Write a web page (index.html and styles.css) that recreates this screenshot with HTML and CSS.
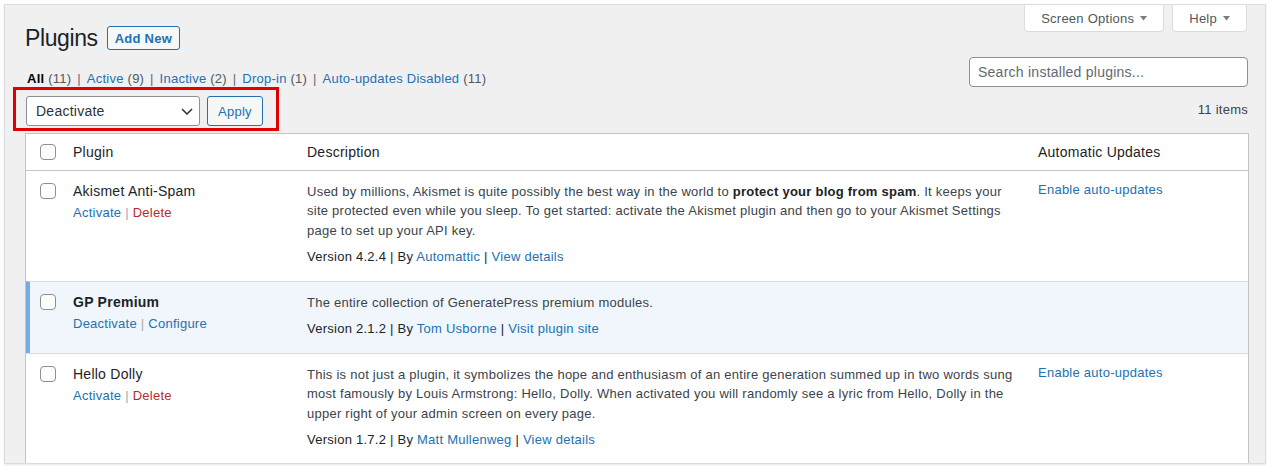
FILE: index.html
```html
<!DOCTYPE html>
<html lang="en">
<head>
  <meta charset="UTF-8" />
  <meta name="viewport" content="width=device-width, initial-scale=1.0" />
  <title>Plugins</title>
  <link rel="stylesheet" href="styles.css">
</head>
<body>
  <div class="screen">
    <!-- Screen options / help tabs -->
    <div class="screen-meta">
      <button class="meta-tab">Screen Options <svg width="7" height="5" viewBox="0 0 7 5"><path d="M0 0h7L3.5 4.5z" fill="#787c82"/></svg></button>
      <button class="meta-tab">Help <svg width="7" height="5" viewBox="0 0 7 5"><path d="M0 0h7L3.5 4.5z" fill="#787c82"/></svg></button>
    </div>

    <div class="wrap">
      <div class="page-head">
        <h1>Plugins</h1>
        <a class="add-new" href="#">Add New</a>
      </div>

      <div class="filters">
        <ul class="views">
          <li><a class="current" href="#">All <span class="count">(11)</span></a> <span class="sep">|</span></li>
          <li><a href="#">Active <span class="count">(9)</span></a> <span class="sep">|</span></li>
          <li><a href="#">Inactive <span class="count">(2)</span></a> <span class="sep">|</span></li>
          <li><a href="#">Drop-in <span class="count">(1)</span></a> <span class="sep">|</span></li>
          <li><a href="#">Auto-updates Disabled <span class="count">(11)</span></a></li>
        </ul>
        <input class="search" type="search" placeholder="Search installed plugins..." />
      </div>

      <div class="tablenav">
        <div class="highlight">
          <div class="select">
            <span>Deactivate</span>
            <svg width="12" height="7" viewBox="0 0 12 7"><path d="M1 1l5 5 5-5" fill="none" stroke="#2c3338" stroke-width="1.5"/></svg>
          </div>
          <button class="apply">Apply</button>
        </div>
        <span class="num-items">11 items</span>
      </div>

      <!-- Plugin list -->
      <table class="plugins">
        <thead>
          <tr>
            <th class="col-check"><input class="cb" type="checkbox" /></th>
            <th class="col-plugin">Plugin</th>
            <th class="col-desc">Description</th>
            <th class="col-auto">Automatic Updates</th>
          </tr>
        </thead>
        <tbody>
          <tr>
            <td class="check"><input class="cb" type="checkbox" /></td>
            <td>
              <div class="plugin-title">Akismet Anti-Spam</div>
              <div class="row-actions"><a href="#">Activate</a> <span class="sep">|</span> <a class="delete" href="#">Delete</a></div>
            </td>
            <td>
              <p class="desc">Used by millions, Akismet is quite possibly the best way in the world to <strong>protect your blog from spam</strong>. It keeps your site protected even while you sleep. To get started: activate the Akismet plugin and then go to your Akismet Settings page to set up your API key.</p>
              <div class="meta">Version 4.2.4 | By <a href="#">Automattic</a> | <a href="#">View details</a></div>
            </td>
            <td><a href="#">Enable auto-updates</a></td>
          </tr>
          <tr class="active">
            <td class="check"><input class="cb" type="checkbox" /></td>
            <td>
              <div class="plugin-title"><strong>GP Premium</strong></div>
              <div class="row-actions"><a href="#">Deactivate</a> <span class="sep">|</span> <a href="#">Configure</a></div>
            </td>
            <td>
              <p class="desc">The entire collection of GeneratePress premium modules.</p>
              <div class="meta">Version 2.1.2 | By <a href="#">Tom Usborne</a> | <a href="#">Visit plugin site</a></div>
            </td>
            <td></td>
          </tr>
          <tr>
            <td class="check"><input class="cb" type="checkbox" /></td>
            <td>
              <div class="plugin-title">Hello Dolly</div>
              <div class="row-actions"><a href="#">Activate</a> <span class="sep">|</span> <a class="delete" href="#">Delete</a></div>
            </td>
            <td>
              <p class="desc">This is not just a plugin, it symbolizes the hope and enthusiasm of an entire generation summed up in two words sung most famously by Louis Armstrong: Hello, Dolly. When activated you will randomly see a lyric from Hello, Dolly in the upper right of your admin screen on every page.</p>
              <div class="meta">Version 1.7.2 | By <a href="#">Matt Mullenweg</a> | <a href="#">View details</a></div>
            </td>
            <td><a href="#">Enable auto-updates</a></td>
          </tr>
        </tbody>
      </table>
    </div>
  </div>
</body>
</html>
```

FILE: styles.css
```css
* {
  box-sizing: border-box;
}
body {
  margin: 0;
  padding: 4px;
  background-color: #fff;
  color: #3c434a;
  font-family: "Liberation Sans", Arial, sans-serif;
  font-size: 13px;
  letter-spacing: 0.25px;
}
a {
  color: #2271b1;
  text-decoration: none;
}
button, input {
  font: inherit;
  letter-spacing: inherit;
}

.screen {
  height: 460px;
  overflow: hidden;
  background-color: #f0f0f1;
  border: 1px solid #dcdcde;
  box-shadow: 0 1px 2px rgba(0, 0, 0, 0.1);
}

/* top tabs */
.screen-meta {
  display: flex;
  justify-content: flex-end;
  gap: 8px;
  padding-right: 18px;
}
.meta-tab {
  display: flex;
  align-items: center;
  gap: 6px;
  height: 27px;
  padding: 0 16px;
  background-color: #fff;
  border: 1px solid #dcdcde;
  border-top: 0;
  border-radius: 0 0 4px 4px;
  color: #50575e;
}

.wrap {
  padding: 0 16px 0 20px;
}
.page-head {
  display: flex;
  align-items: center;
  gap: 9px;
  height: 30px;
  margin-top: -9px;
}
h1 {
  margin: 0;
  font-size: 23px;
  font-weight: 400;
  line-height: 30px;
  letter-spacing: -0.4px;
  color: #1d2327;
}
.add-new {
  display: flex;
  align-items: center;
  height: 24px;
  padding: 0 7px;
  border: 1px solid #2271b1;
  border-radius: 3px;
  background-color: #f6f7f7;
  font-weight: 600;
}

/* views + search */
.filters {
  display: flex;
  justify-content: space-between;
  align-items: flex-start;
  margin-top: 4px;
}
.views {
  margin: 13px 0 0;
  padding: 0 0 0 2px;
  list-style: none;
  line-height: 17px;
}
.views li {
  display: inline;
}
.views .current {
  color: #000;
  font-weight: 600;
}
.views .count {
  color: #50575e;
  font-weight: 400;
}
.views .sep {
  margin: 0 2px;
  color: #646970;
}
.search {
  width: 279px;
  height: 30px;
  margin-right: 1px;
  padding: 0 8px;
  border: 1px solid #8c8f94;
  border-radius: 4px;
  font-size: 14px;
  color: #2c3338;
  background-color: #fff;
}
.search::placeholder {
  color: #646970;
}

/* bulk actions */
.tablenav {
  display: flex;
  justify-content: space-between;
  align-items: center;
}
.highlight {
  display: flex;
  gap: 7px;
  margin-left: -12px;
  padding: 6px 13px 2px 10px;
  border: 3px solid #e00000;
}
.select {
  display: flex;
  align-items: center;
  justify-content: space-between;
  width: 174px;
  height: 30px;
  padding: 0 6px 0 9px;
  border: 1px solid #8c8f94;
  border-radius: 3px;
  background-color: #fff;
  font-size: 14px;
  color: #2c3338;
}
.apply {
  height: 30px;
  padding: 0 10px;
  border: 1px solid #2271b1;
  border-radius: 3px;
  background-color: #f6f7f7;
  color: #2271b1;
}
.num-items {
  margin-right: 1px;
  color: #3c434a;
}

/* table */
.plugins {
  width: 100%;
  margin-top: 2px;
  border: 1px solid #c3c4c7;
  border-spacing: 0;
  table-layout: fixed;
  background-color: #fff;
}
.plugins th {
  padding: 9px 10px 7px;
  border-bottom: 1px solid #c3c4c7;
  text-align: left;
  font-size: 14px;
  font-weight: 400;
  line-height: 1.4;
  color: #1d2327;
}
.plugins .col-check {
  width: 37px;
  padding: 0 0 0 14px;
  vertical-align: middle;
}
.col-plugin {
  width: 234px;
}
.col-desc {
  width: 731px;
}
.plugins td {
  padding: 11px 10px 14px;
  border-top: 1px solid #dcdcde;
  vertical-align: top;
}
.plugins tbody tr:first-child td {
  border-top: 0;
}
.plugins td.check {
  padding: 12px 0 0 14px;
}
.plugins .active td {
  background-color: #f0f6fc;
}
.plugins .active td.check {
  padding-left: 10px;
  border-left: 4px solid #72aee6;
}
.cb {
  appearance: none;
  display: block;
  width: 16px;
  height: 16px;
  margin: 0;
  border: 1px solid #8c8f94;
  border-radius: 4px;
  background-color: #fff;
}

.plugin-title {
  font-size: 14px;
  line-height: 1.4;
  color: #1d2327;
}
.row-actions {
  margin-top: 2px;
  line-height: 1.5;
}
.row-actions .sep {
  color: #a7aaad;
}
.row-actions .delete {
  color: #b32d2e;
}
.desc {
  margin: 0;
  line-height: 1.5;
}
.desc strong {
  color: #1d2327;
}
.meta {
  margin-top: 7px;
  line-height: 1.5;
  color: #1d2327;
}
```
